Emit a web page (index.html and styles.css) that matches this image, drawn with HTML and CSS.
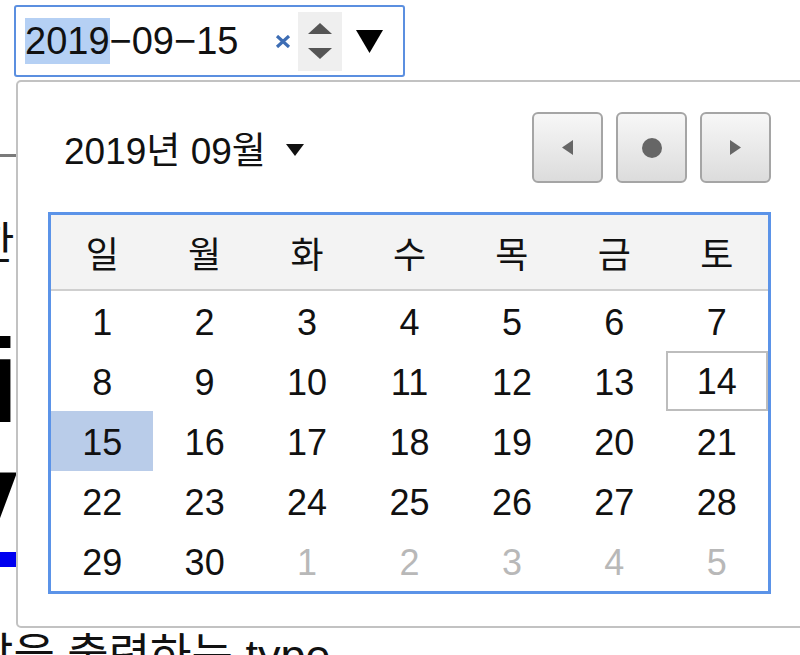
FILE: index.html
```html
<!DOCTYPE html>
<html lang="ko">
<head>
<meta charset="utf-8">
<title>date picker</title>
<link rel="stylesheet" href="styles.css">
</head>
<body>
<div class="page">
  <div class="date-input">
    <span class="value"><span class="sel">2019</span>−09−15</span>
    <span class="clear"><svg width="16" height="13" viewBox="0 0 16 13"><path d="M2 1 L14 12 M14 1 L2 12" stroke="#3d6db4" stroke-width="3.2" fill="none"/></svg></span>
    <span class="spin"><svg width="44" height="59" viewBox="0 0 44 59"><polygon points="10,22 34,22 22,11" fill="#555"/><polygon points="10,36 34,36 22,47" fill="#555"/></svg></span>
    <span class="drop"><svg width="27" height="23" viewBox="0 0 27 23"><polygon points="0,0 27,0 13.5,23" fill="#000"/></svg></span>
  </div>
  <div class="bg">
    <div class="rule"></div>
    <p class="line-ko">한</p>
    <p class="big big-i">i</p>
    <p class="big big-y">y</p>
    <div class="blue-bar"></div>
    <p class="bottom-text">값을 출력하는 type</p>
  </div>
</div>

<div class="popup">
  <div class="pop-header">
    <div class="month-title">2019년 09월<svg class="caret" width="18" height="12" viewBox="0 0 18 12"><polygon points="0,0 18,0 9,12" fill="#111"/></svg></div>
    <div class="nav">
      <button class="nav-btn" type="button"><svg width="11" height="15" viewBox="0 0 11 15"><polygon points="11,0 11,15 0,7.5" fill="#666"/></svg></button>
      <button class="nav-btn" type="button"><svg width="20" height="20" viewBox="0 0 20 20"><circle cx="10" cy="10" r="10" fill="#666"/></svg></button>
      <button class="nav-btn" type="button"><svg width="11" height="15" viewBox="0 0 11 15"><polygon points="0,0 0,15 11,7.5" fill="#666"/></svg></button>
    </div>
  </div>
  <div class="calendar">
    <div class="week-head">
      <span>일</span><span>월</span><span>화</span><span>수</span><span>목</span><span>금</span><span>토</span>
    </div>
    <div class="days">
      <span>1</span><span>2</span><span>3</span><span>4</span><span>5</span><span>6</span><span>7</span>
      <span>8</span><span>9</span><span>10</span><span>11</span><span>12</span><span>13</span><span class="today">14</span>
      <span class="selected">15</span><span>16</span><span>17</span><span>18</span><span>19</span><span>20</span><span>21</span>
      <span>22</span><span>23</span><span>24</span><span>25</span><span>26</span><span>27</span><span>28</span>
      <span>29</span><span>30</span><span class="other">1</span><span class="other">2</span><span class="other">3</span><span class="other">4</span><span class="other">5</span>
    </div>
  </div>
</div>
</body>
</html>
```

FILE: styles.css
```css
html, body {
  margin: 0;
  padding: 0;
  background: #fff;
  overflow: hidden;
}
body {
  width: 800px;
  height: 655px;
  font-family: "Liberation Sans", "Noto Sans CJK KR", sans-serif;
  color: #111;
  position: relative;
}
.page {
  padding-top: 5px;
}

/* date input */
.date-input {
  margin-left: 14px;
  width: 391px;
  height: 72px;
  box-sizing: border-box;
  border: 2px solid #5b8fe0;
  border-radius: 3px;
  display: flex;
  align-items: center;
  background: #fff;
}
.value {
  margin-left: 9px;
  font-size: 38px;
  line-height: 46px;
  color: #111;
  width: 250px;
  white-space: nowrap;
}
.sel {
  background: #b5d0f4;
  display: inline-block;
}
.clear {
  display: flex;
}
.spin {
  display: flex;
  margin-left: 7px;
  background: #efefef;
}
.drop {
  display: flex;
  margin-left: 14px;
}

/* background page content (mostly hidden under popup) */
.rule {
  margin-top: 77px;
  width: 120px;
  height: 3px;
  background: #7a7a7a;
}
.line-ko {
  margin: 58px 0 0 -26px;
  white-space: nowrap;
  font-family: "Noto Sans CJK KR", sans-serif;
  font-size: 44px;
  line-height: 50px;
}
.big {
  white-space: nowrap;
  font-weight: bold;
  font-size: 118px;
  line-height: 113px;
  color: #000;
}
.big-i {
  margin: 60px 0 0 -14px;
}
.big-y {
  margin: 0 0 0 -48px;
}
.blue-bar {
  margin-top: 1px;
  width: 120px;
  height: 15px;
  background: #0000f0;
}
.bottom-text {
  margin: 64px 0 0 -28px;
  white-space: nowrap;
  font-size: 45px;
  line-height: 50px;
}

/* popup */
.popup {
  position: absolute;
  left: 16px;
  top: 80px;
  width: 800px;
  height: 548px;
  box-sizing: border-box;
  border: 2px solid #c2c2c2;
  border-radius: 5px;
  background: #fff;
  padding: 30px 0 0 30px;
}
.pop-header {
  width: 723px;
  height: 71px;
  display: flex;
  align-items: center;
  justify-content: space-between;
}
.month-title {
  padding-left: 16px;
  font-size: 37px;
  display: flex;
  align-items: center;
  white-space: nowrap;
}
.caret {
  margin-left: 20px;
  margin-top: 4px;
}
.nav {
  display: flex;
  gap: 13px;
}
.nav-btn {
  width: 71px;
  height: 71px;
  box-sizing: border-box;
  border: 2px solid #a5a5a5;
  border-radius: 6px;
  background: linear-gradient(#f7f7f7, #dcdcdc);
  padding: 0;
  display: flex;
  align-items: center;
  justify-content: center;
}

.calendar {
  margin-top: 29px;
  width: 723px;
  box-sizing: border-box;
  border: 3px solid #5b93e8;
}
.week-head {
  display: grid;
  grid-template-columns: repeat(7, 1fr);
  height: 74px;
  background: #f3f3f3;
  border-bottom: 2px solid #cfcfcf;
  font-family: "Noto Sans CJK KR", sans-serif;
  font-size: 36px;
}
.week-head span {
  display: flex;
  align-items: center;
  justify-content: center;
}
.days {
  display: grid;
  grid-template-columns: repeat(7, 1fr);
  grid-auto-rows: 60px;
  font-size: 36px;
}
.days span {
  display: flex;
  align-items: center;
  justify-content: center;
  box-sizing: border-box;
  padding-top: 3px;
}
.days .today {
  border: 2px solid #bdbdbd;
  padding-top: 1px;
}
.days .selected {
  background: #b9cce9;
}
.days .other {
  color: #b8b8b8;
}
```
